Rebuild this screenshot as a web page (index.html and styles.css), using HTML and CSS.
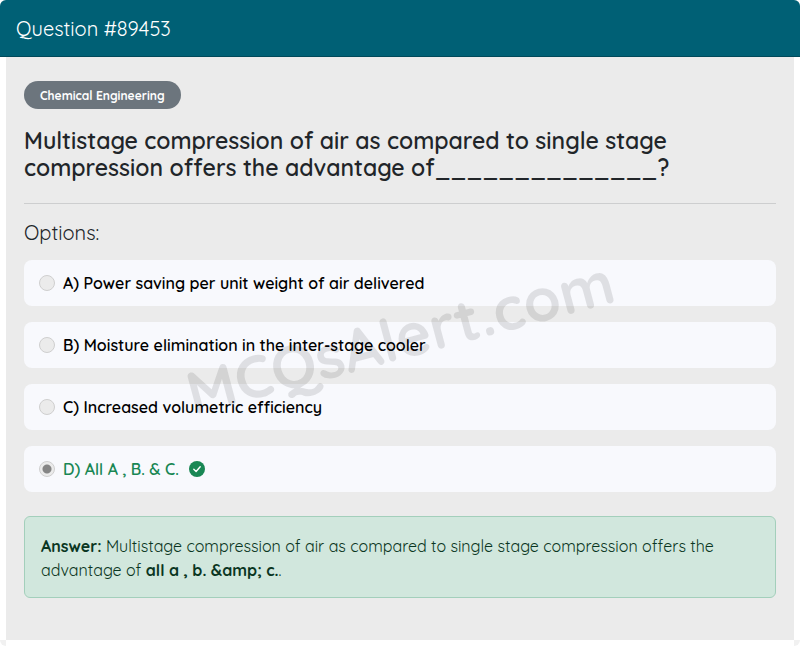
FILE: index.html
```html
<!DOCTYPE html>
<html lang="en">
<head>
    <meta charset="utf-8">
    <meta name="viewport" content="width=device-width, initial-scale=1">
    <title>Question #89453</title>
    <link rel="stylesheet" href="styles.css">
</head>
<body>
<div class="card">
    <div class="card-header">Question #89453</div>
    <div class="card-body">
        <span class="badge">Chemical Engineering</span>
        <h1 class="question">Multistage compression of air as compared to single stage compression offers the advantage of______________?</h1>
        <hr class="divider">

        <fieldset class="options">
            <legend class="options-title">Options:</legend>
            <div class="option">
                <input type="radio" name="answer" id="optionA" disabled>
                <label for="optionA">A) Power saving per unit weight of air delivered</label>
            </div>
            <div class="option">
                <input type="radio" name="answer" id="optionB" disabled>
                <label for="optionB">B) Moisture elimination in the inter-stage cooler</label>
            </div>
            <div class="option">
                <input type="radio" name="answer" id="optionC" disabled>
                <label for="optionC">C) Increased volumetric efficiency</label>
            </div>
            <div class="option correct">
                <input type="radio" name="answer" id="optionD" checked disabled>
                <label for="optionD">D) All A , B. &amp; C.</label>
                <svg class="check" viewBox="0 0 16 16" aria-hidden="true">
                    <circle cx="8" cy="8" r="8" fill="#198754"/>
                    <path d="M4.8 8.2 7.1 10.5 11.2 5.7" fill="none" stroke="#fff" stroke-width="1.4" stroke-linecap="round" stroke-linejoin="round"/>
                </svg>
            </div>
        </fieldset>

        <div class="answer">
            <strong>Answer:</strong> Multistage compression of air as compared to single stage compression offers the advantage of <strong>all a , b. &amp;amp; c.</strong>.
        </div>

        <div class="watermark">MCQsAlert.com</div>
    </div>
    <div class="card-footer"></div>
</div>
</body>
</html>
```

FILE: styles.css
```css
* {
    box-sizing: border-box;
}

body {
    margin: 0;
    background: #fff;
    color: #212529;
    font-family: Quicksand, Lato, sans-serif;
    font-size: 16px;
    line-height: 24px;
}

.card {
    border-radius: 6px;
    background: #f1f1f1;
    overflow: hidden;
}

.card-header {
    padding: 17px 16px 15px;
    border-bottom: 1px solid #00495a;
    background: #006075;
    color: #fff;
    font-size: 20px;
}

.card-body {
    position: relative;
    padding: 24px 18px 42px;
    border: solid #fff;
    border-width: 0 6px;
    background: #ebebeb;
}

.badge {
    display: block;
    width: fit-content;
    padding: 3px 16px 1px;
    border-radius: 14px;
    background: #6c757d;
    color: #fff;
    font-size: 12px;
    font-weight: 700;
}

.question {
    margin: 18px 0 22px;
    font-size: 23px;
    font-weight: 600;
    line-height: 27px;
}

.divider {
    margin: 0 0 17px;
    border: 0;
    border-top: 1px solid #cdcecf;
}

.options {
    display: flex;
    flex-direction: column;
    gap: 16px;
    min-width: 0;
    margin: 0;
    padding: 0;
    border: 0;
}

.options-title {
    margin-bottom: 15px;
    padding: 0;
    font-size: 20px;
}

.option {
    display: flex;
    align-items: center;
    gap: 8px;
    padding: 11px 15px;
    border-radius: 8px;
    background: #f8f9fd;
    color: #000;
    font-weight: 600;
}

.option input {
    appearance: none;
    flex: none;
    width: 16px;
    height: 16px;
    margin: 0;
    border: 1px solid #cfcfcf;
    border-radius: 50%;
    background: #ebebeb;
}

.option input:checked {
    background: radial-gradient(circle, #858585 4px, #ebebeb 5px);
}

.option.correct {
    color: #198754;
}

.check {
    width: 16px;
    height: 16px;
    margin-left: 2px;
}

.answer {
    margin-top: 24px;
    padding: 17px 16px 15px;
    border: 1px solid #a3cfbb;
    border-radius: 6px;
    background: #d1e7dd;
    color: #0a3622;
}

.answer strong {
    font-weight: 700;
}

.watermark {
    position: absolute;
    top: 48%;
    left: 50%;
    transform: translate(-50%, -50%) rotate(-15deg);
    color: rgba(0, 0, 0, 0.1);
    font-size: 60px;
    font-weight: 700;
    line-height: 72px;
    white-space: nowrap;
    pointer-events: none;
}

.card-footer {
    height: 6px;
    margin: 0 6px;
    background: #fff;
}
```
